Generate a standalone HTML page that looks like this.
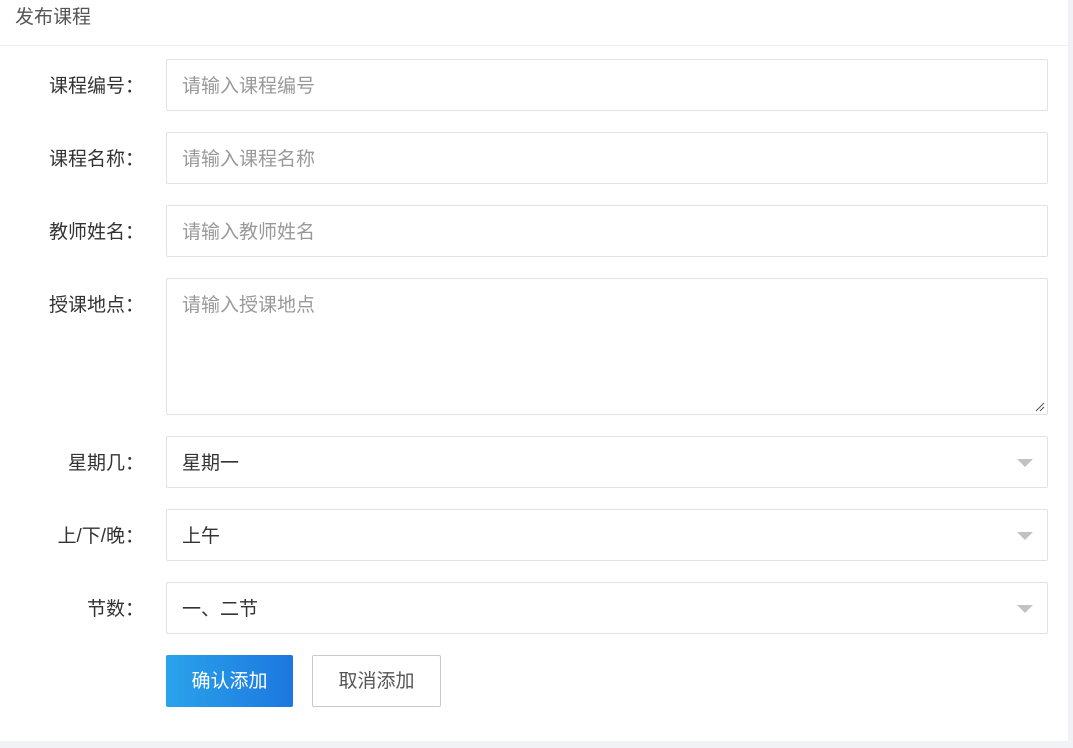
<!DOCTYPE html>
<html><head><meta charset="utf-8"><style>
body{margin:0;width:1073px;height:748px;background:#f0f2f5;font-family:"Liberation Sans","Noto Sans CJK SC",sans-serif;overflow:hidden;position:relative}
.card{position:absolute;left:0;top:0;width:1068px;height:741px;background:#fff}
.hd{position:absolute;left:15px;top:2px;font-size:19px;color:#555}
.line{position:absolute;left:0;top:45px;width:1068px;height:1px;background:#f0f0f0}
.lb{position:absolute;right:924px;font-size:19px;color:#333;width:130px;text-align:right;margin-top:-3px}
.in{position:absolute;left:166px;width:880px;height:50px;border:1px solid #e2e2e2;border-radius:2px;box-sizing:content-box;font-size:19px;color:#999;padding-left:0}
.in span{position:absolute;left:15px;top:11px}
.sel span{color:#333}
.arr{position:absolute;right:14px;top:22px;width:0;height:0;border-left:8px solid transparent;border-right:8px solid transparent;border-top:8px solid #c2c2c2}
.b1{position:absolute;left:166px;top:655px;width:127px;height:52px;border-radius:2px;background:linear-gradient(90deg,#2aa3ea,#1c77e0);color:#fff;font-size:19px;text-align:center;line-height:54px}
.b2{position:absolute;left:312px;top:655px;width:127px;height:50px;border:1px solid #c9c9c9;border-radius:2px;color:#555;font-size:19px;text-align:center;line-height:52px}
</style></head><body>
<div class="card">
<div class="hd">发布课程</div><div class="line"></div>
<div class="lb" style="top:74px">课程编号：</div>
<div class="in" style="top:59px"><span>请输入课程编号</span></div>
<div class="lb" style="top:147px">课程名称：</div>
<div class="in" style="top:132px"><span>请输入课程名称</span></div>
<div class="lb" style="top:220px">教师姓名：</div>
<div class="in" style="top:205px"><span>请输入教师姓名</span></div>
<div class="lb" style="top:293px">授课地点：</div>
<div class="in" style="top:278px;height:135px"><span>请输入授课地点</span>
<svg style="position:absolute;right:2px;bottom:2px" width="10" height="10"><path d="M1 9L9 1M5 9L9 5" stroke="#555" stroke-width="1"/></svg></div>
<div class="lb" style="top:451px">星期几：</div>
<div class="in sel" style="top:436px"><span>星期一</span><div class="arr"></div></div>
<div class="lb" style="top:524px">上/下/晚：</div>
<div class="in sel" style="top:509px"><span>上午</span><div class="arr"></div></div>
<div class="lb" style="top:597px">节数：</div>
<div class="in sel" style="top:582px"><span>一、二节</span><div class="arr"></div></div>
<div class="b1">确认添加</div><div class="b2">取消添加</div>
</div>
</body></html>
